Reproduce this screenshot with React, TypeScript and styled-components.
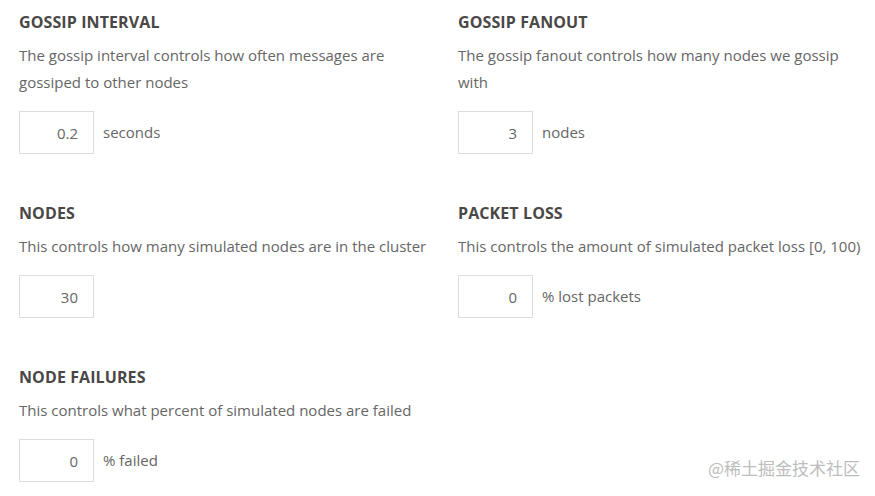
import React from "react"
import styled, { createGlobalStyle } from "styled-components"

const GlobalStyle = createGlobalStyle`
  html, body {
    margin: 0;
    padding: 0;
    background: #ffffff;
  }
  body {
    font-family: "Open Sans", "Liberation Sans", sans-serif;
    color: #666666;
  }
`

type Setting = {
  title: string
  text: string
  value: string
  unit?: string
}

const settings: Setting[] = [
  {
    title: "Gossip Interval",
    text: "The gossip interval controls how often messages are gossiped to other nodes",
    value: "0.2",
    unit: "seconds",
  },
  {
    title: "Gossip Fanout",
    text: "The gossip fanout controls how many nodes we gossip with",
    value: "3",
    unit: "nodes",
  },
  {
    title: "Nodes",
    text: "This controls how many simulated nodes are in the cluster",
    value: "30",
  },
  {
    title: "Packet Loss",
    text: "This controls the amount of simulated packet loss [0, 100)",
    value: "0",
    unit: "% lost packets",
  },
  {
    title: "Node Failures",
    text: "This controls what percent of simulated nodes are failed",
    value: "0",
    unit: "% failed",
  },
]

const App: React.FC = () => {
  return (
    <Page>
      <GlobalStyle />
      <Grid>
        {settings.map((item, key) => (
          <Section key={key}>
            <Title>{item.title}</Title>
            <Description>{item.text}</Description>
            <InputRow>
              <NumberInput type="text" defaultValue={item.value} />
              {item.unit && <Unit>{item.unit}</Unit>}
            </InputRow>
          </Section>
        ))}
      </Grid>
      <Watermark>@稀土掘金技术社区</Watermark>
    </Page>
  )
}

const Page = styled.div`
  position: relative;
  width: 875px;
  height: 496px;
  overflow: hidden;
  padding: 12px 0 0 19px;
  box-sizing: border-box;
`

const Grid = styled.div`
  display: grid;
  grid-template-columns: 439px 420px;
  row-gap: 49px;
`

const Section = styled.div`
  display: flex;
  flex-direction: column;
  padding-right: 14px;
`

const Title = styled.h3`
  margin: 0;
  font-family: "Open Sans", "Liberation Sans", sans-serif;
  font-weight: 700;
  font-size: 16px;
  line-height: 20px;
  letter-spacing: 0.1px;
  text-transform: uppercase;
  color: #4a4846;
`

const Description = styled.p`
  margin: 10px 0 0;
  font-size: 15px;
  line-height: 27px;
  color: #666666;
`

const InputRow = styled.div`
  display: flex;
  align-items: center;
  gap: 9px;
  margin-top: 15px;
`

const NumberInput = styled.input`
  width: 75px;
  height: 43px;
  box-sizing: border-box;
  border: 1px solid #dddddd;
  padding: 0 15px 0 0;
  text-align: right;
  font-family: "Open Sans", "Liberation Sans", sans-serif;
  font-size: 15px;
  color: #666666;
  outline: none;
  background: #ffffff;
`

const Unit = styled.span`
  font-size: 15px;
  color: #666666;
  margin-top: -1px;
`

const Watermark = styled.div`
  position: absolute;
  right: 15px;
  bottom: 16px;
  font-family: "Noto Sans CJK SC", sans-serif;
  font-size: 17px;
  color: #bdbdbd;
`

export default App
